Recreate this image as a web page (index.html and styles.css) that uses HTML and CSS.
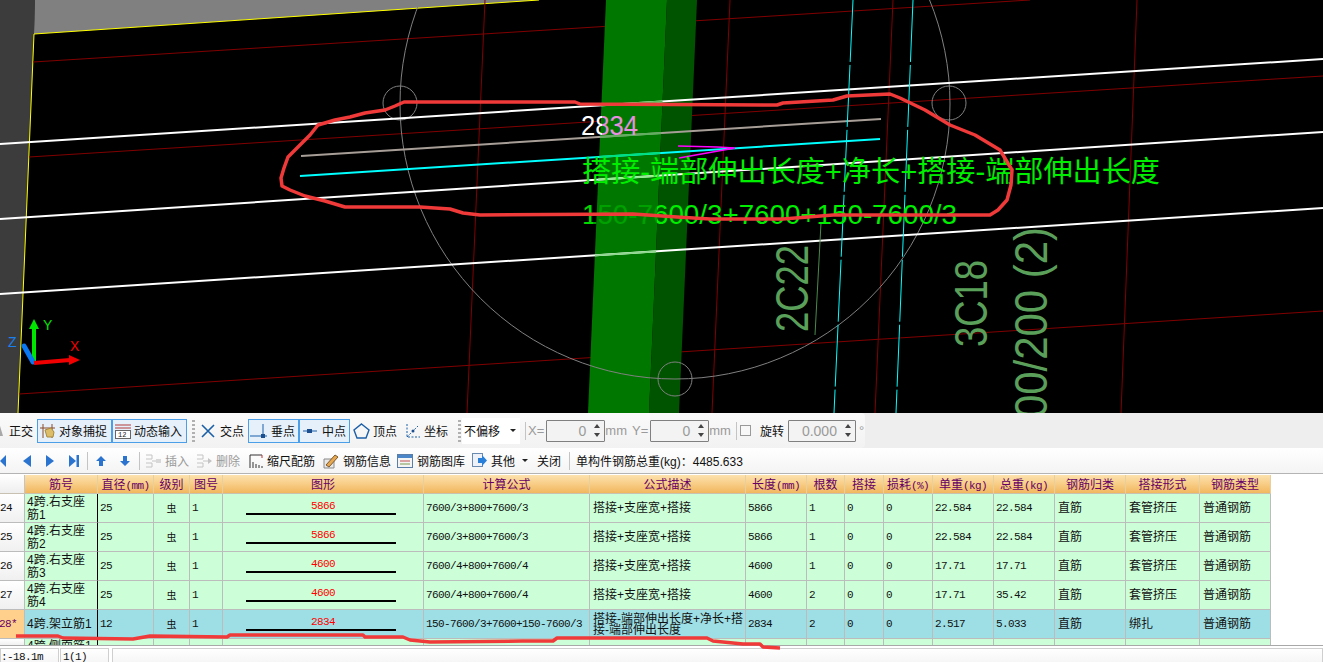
FILE: index.html
```html
<!DOCTYPE html>
<html lang="zh-CN">
<head>
    <meta charset="UTF-8">
    <title>钢筋三维</title>
    <link rel="stylesheet" href="styles.css">
</head>
<body>
<div class="page">

    <!-- 三维视图 -->
    <svg class="view" width="1323" height="413" viewBox="0 0 1323 413">
        <defs>
            <clipPath id="col-clip"><polygon points="606,0 667,0 649,413 588,413"/></clipPath>
            <linearGradient id="len-fill" x1="0" x2="1" y1="0" y2="0">
                <stop offset="0.36" stop-color="#ffffff"/>
                <stop offset="0.36" stop-color="#e88ee0"/>
            </linearGradient>
            <linearGradient id="calc-fill" gradientUnits="userSpaceOnUse" x1="582" x2="957" y1="0" y2="0">
                <stop offset="0.03" stop-color="#00d800"/>
                <stop offset="0.03" stop-color="#00a000"/>
                <stop offset="0.2" stop-color="#00a000"/>
                <stop offset="0.2" stop-color="#00ee00"/>
            </linearGradient>
        </defs>
        <rect width="1323" height="413" fill="#000"/>
        <polygon points="0,0 35,0 34,34 18,413 0,413" fill="#3c3c3c"/>
        <polygon points="35,0 539,0 34,34" fill="#808080"/>
        <polyline points="539,0 34,34 18,413" fill="none" stroke="#ffff00"/>

        <g stroke="#800000" fill="none">
            <line x1="33" y1="62" x2="1030" y2="0"/>
            <line x1="29" y1="157" x2="1323" y2="76"/>
            <line x1="19" y1="394" x2="1323" y2="311"/>
            <line x1="485" y1="0" x2="467" y2="413"/>
            <line x1="730" y1="0" x2="712" y2="413"/>
            <line x1="893" y1="0" x2="875" y2="413"/>
            <line x1="1137" y1="0" x2="1121" y2="413"/>
        </g>

        <polygon points="606,0 667,0 649,413 588,413" fill="#007800"/>
        <polygon points="667,0 697,0 679,413 649,413" fill="#005400"/>

        <circle cx="675" cy="104" r="275" fill="none" stroke="#808080"/>
        <circle cx="400" cy="103" r="17" fill="none" stroke="#808080"/>
        <circle cx="949" cy="103" r="17" fill="none" stroke="#808080"/>
        <circle cx="675" cy="379" r="17" fill="none" stroke="#808080"/>

        <g stroke="#fff" stroke-width="2">
            <line x1="0" y1="144" x2="1323" y2="59"/>
            <line x1="0" y1="219" x2="1323" y2="132"/>
            <line x1="0" y1="294" x2="1323" y2="208"/>
        </g>
        <line x1="301" y1="156" x2="881" y2="119" stroke="#a89e98" stroke-width="2"/>
        <line x1="300" y1="176" x2="880" y2="139" stroke="#00ffff" stroke-width="2"/>
        <g clip-path="url(#col-clip)" stroke-width="2">
            <line x1="0" y1="144" x2="1323" y2="59" stroke="#60c060"/>
            <line x1="0" y1="219" x2="1323" y2="132" stroke="#90ee90"/>
            <line x1="0" y1="294" x2="1323" y2="208" stroke="#90d890"/>
            <line x1="301" y1="156" x2="881" y2="119" stroke="#60b060"/>
            <line x1="300" y1="176" x2="880" y2="139" stroke="#00e080"/>
        </g>

        <g stroke="#00ffff" stroke-dasharray="62 3" fill="none">
            <line x1="853" y1="0" x2="834" y2="413"/>
            <line x1="913" y1="0" x2="896" y2="413"/>
        </g>
        <line x1="821" y1="223" x2="815" y2="335" stroke="#4a8a4a"/>
        <polyline points="678,146 717,147 735,148 679,158" fill="none" stroke="#ff00ff" stroke-width="1.5"/>

        <text class="t-len" x="581" y="135" textLength="57" lengthAdjust="spacingAndGlyphs">2834</text>
        <text class="t-desc" x="582" y="182" textLength="578" lengthAdjust="spacingAndGlyphs">搭接-端部伸出长度+净长+搭接-端部伸出长度</text>
        <text class="t-calc" x="582" y="224" textLength="375" lengthAdjust="spacingAndGlyphs">150-7600/3+7600+150-7600/3</text>
        <text class="t-mark" transform="translate(808 332) rotate(-90)" textLength="87" lengthAdjust="spacingAndGlyphs">2C22</text>
        <text class="t-mark" transform="translate(987 347) rotate(-90)" textLength="87" lengthAdjust="spacingAndGlyphs">3C18</text>
        <text class="t-mark" transform="translate(1047 418) rotate(-90)" textLength="191" lengthAdjust="spacingAndGlyphs">00/200 (2)</text>

        <!-- 坐标轴 -->
        <line x1="34" y1="363" x2="34" y2="328" stroke="#00e600" stroke-width="4"/>
        <polygon points="34,319 39,329 29,329" fill="#00e600"/>
        <line x1="33" y1="362" x2="24" y2="346" stroke="#0a78f0" stroke-width="5" stroke-linecap="round"/>
        <line x1="34" y1="363" x2="70" y2="360" stroke="#f00000" stroke-width="4"/>
        <polygon points="80,360 69,355 69,365" fill="#f00000"/>
        <text class="t-axis" x="43" y="330" fill="#00e600">Y</text>
        <text class="t-axis" x="8" y="347" fill="#1a80f0">Z</text>
        <text class="t-axis" x="70" y="351" fill="#f00000">X</text>
    </svg>

    <!-- 捕捉工具条 -->
    <div class="bar-snap">
        <div class="strip">
            <svg class="ico-cut" width="3" height="12" viewBox="0 0 3 12"><path d="M0 1L3 11L0 11Z" fill="#a8a8a8"/></svg>
            <span class="tool first">正交</span>
            <span class="tool on wide">
                <svg width="16" height="16" viewBox="0 0 16 16"><path d="M3 1V15M12 1V15M0 5H15" stroke="#8a4b2a" fill="none"/><path d="M5 7L11 5L14 9L13 14L7 14Z" fill="#dcbd6a" stroke="#a98a3a"/></svg>
                对象捕捉
            </span>
            <span class="tool on wide">
                <svg width="16" height="16" viewBox="0 0 16 16"><path d="M0 2H16M0 5H16" stroke="#b03a3a"/><rect x="0.5" y="7.5" width="15" height="8" fill="#fff" stroke="#666"/><text class="ico-num" x="3" y="14">12</text></svg>
                动态输入
            </span>
            <span class="grip"></span>
            <span class="tool cross">
                <svg width="16" height="16" viewBox="0 0 16 16"><path d="M2 2L14 14M14 2L2 14" stroke="#1b5fa8" stroke-width="1.6"/></svg>
                交点
            </span>
            <span class="tool on snap">
                <svg width="17" height="16" viewBox="0 0 17 16"><path d="M0 13H17M13 1V13" stroke="#1b5fa8"/><rect x="11" y="11" width="4" height="4" fill="#1b4f90"/></svg>
                垂点
            </span>
            <span class="tool on snap">
                <svg width="17" height="16" viewBox="0 0 17 16"><path d="M2 8H16" stroke="#1b5fa8"/><rect x="6" y="6" width="5" height="4" fill="#1b4f90"/></svg>
                中点
            </span>
            <span class="tool apex">
                <svg width="17" height="16" viewBox="0 0 17 16"><path d="M8.5 1L16 7L13 15H4L1 7Z" fill="none" stroke="#1b5fa8" stroke-width="1.4"/></svg>
                顶点
            </span>
            <span class="tool coord">
                <svg width="17" height="16" viewBox="0 0 17 16"><path d="M3 1V14H16M3 14L14 3" stroke="#1b5fa8" stroke-dasharray="2 1.5" fill="none"/><circle cx="9" cy="8" r="1.5" fill="#1b4f90"/></svg>
                坐标
            </span>
            <span class="grip offset"></span>
            <span class="combo">不偏移<i class="caret"></i></span>
            <span class="sep"></span>
            <span class="lbl dis">X=</span>
            <span class="spin"><b>0</b><i class="arrows"></i></span>
            <span class="lbl dis unit">mm</span>
            <span class="lbl dis ylab">Y=</span>
            <span class="spin"><b>0</b><i class="arrows"></i></span>
            <span class="lbl dis unit">mm</span>
            <span class="sep"></span>
            <span class="check"></span>
            <span class="lbl rotate">旋转</span>
            <span class="spin long"><b>0.000</b><i class="arrows"></i></span>
            <span class="lbl dis deg">°</span>
        </div>
    </div>

    <!-- 钢筋表工具条 -->
    <div class="bar-rebar">
        <svg class="nav n1" width="6" height="12" viewBox="0 0 6 12"><path d="M6 0V12L0 6Z" fill="#2a74d0"/></svg>
        <svg class="nav n2" width="8" height="12" viewBox="0 0 8 12"><path d="M8 0V12L0 6Z" fill="#2a74d0"/></svg>
        <svg class="nav n3" width="8" height="12" viewBox="0 0 8 12"><path d="M0 0V12L8 6Z" fill="#2a74d0"/></svg>
        <svg class="nav n4" width="10" height="12" viewBox="0 0 10 12"><path d="M0 0V12L7 6Z" fill="#2a74d0"/><rect x="7.5" width="2.5" height="12" fill="#2a74d0"/></svg>
        <span class="sep s-nav"></span>
        <svg class="nav up" width="10" height="10" viewBox="0 0 10 10"><path d="M5 0L10 5H7V10H3V5H0Z" fill="#2a74d0"/></svg>
        <svg class="nav down" width="10" height="10" viewBox="0 0 10 10"><path d="M5 10L10 5H7V0H3V5H0Z" fill="#2a74d0"/></svg>
        <span class="sep s-move"></span>
        <span class="act dis a-insert">
            <svg width="16" height="16" viewBox="0 0 16 16"><path d="M1 2H7V6H1M1 10H7V14H1M7 8H11" fill="none" stroke="#c4c4c4"/><rect x="11" y="6" width="5" height="4" fill="#d8d8d8"/></svg>
            插入
        </span>
        <span class="act dis a-delete">
            <svg width="16" height="16" viewBox="0 0 16 16"><path d="M1 2H7V6H1M1 10H7V14H1M7 8H12" fill="none" stroke="#c4c4c4"/><path d="M12 5L16 8L12 11Z" fill="#c4c4c4"/></svg>
            删除
        </span>
        <span class="act a-scale">
            <svg width="14" height="16" viewBox="0 0 14 16"><path d="M1 2H13M1 2V15M4 15V9M7 15V11M10 15V12M13 15V13" stroke="#333" fill="none"/><path d="M13 2V5" stroke="#c03030"/></svg>
            缩尺配筋
        </span>
        <span class="act a-info">
            <svg width="16" height="16" viewBox="0 0 16 16"><path d="M1 6H11V15H1Z" fill="#e8e8e8" stroke="#8a8a8a"/><path d="M3 12L12 2L15 4L6 14Z" fill="#e8a850" stroke="#7a5a30"/></svg>
            钢筋信息
        </span>
        <span class="act a-lib">
            <svg width="16" height="14" viewBox="0 0 16 14"><rect x="0.5" y="0.5" width="15" height="13" fill="#f4f4f4" stroke="#5a7ea8"/><rect x="1" y="1" width="14" height="3" fill="#4a86c8"/><path d="M3 7H13" stroke="#c05050"/><path d="M3 10H13" stroke="#7a9a50"/></svg>
            钢筋图库
        </span>
        <span class="act a-other">
            <svg width="15" height="15" viewBox="0 0 15 15"><rect x="0.5" y="0.5" width="10" height="13" fill="#eef2f8" stroke="#6a8ab0"/><path d="M6 5H10V2L15 7.5L10 13V10H6Z" fill="#2a80d8"/></svg>
            其他<i class="caret small"></i>
        </span>
        <span class="act a-close">关闭</span>
        <span class="sep s-total"></span>
        <span class="total">单构件钢筋总重(kg)：4485.633</span>
    </div>

    <!-- 钢筋表 -->
    <div class="grid-wrap">
        <table class="grid">
            <colgroup>
                <col class="c-no"><col class="c-name"><col class="c-dia"><col class="c-grade"><col class="c-fig">
                <col class="c-shape"><col class="c-calc"><col class="c-desc"><col class="c-len"><col class="c-count">
                <col class="c-lap"><col class="c-loss"><col class="c-unit"><col class="c-sum"><col class="c-kind">
                <col class="c-form"><col class="c-type">
            </colgroup>
            <thead>
                <tr>
                    <th class="corner"></th><th>筋号</th><th>直径<em>(mm)</em></th><th>级别</th><th>图号</th><th>图形</th>
                    <th>计算公式</th><th>公式描述</th><th>长度<em>(mm)</em></th><th>根数</th><th>搭接</th><th>损耗<em>(%)</em></th>
                    <th>单重<em>(kg)</em></th><th>总重<em>(kg)</em></th><th>钢筋归类</th><th>搭接形式</th><th>钢筋类型</th>
                </tr>
            </thead>
            <tbody>
                <tr>
                    <td class="no">24</td><td class="name">4跨.右支座<br>筋1</td><td class="num">25</td><td class="grade">虫</td><td class="num">1</td>
                    <td class="shape"><span>5866</span><i></i></td><td class="num">7600/3+800+7600/3</td><td>搭接+支座宽+搭接</td>
                    <td class="num">5866</td><td class="num">1</td><td class="num">0</td><td class="num">0</td><td class="num">22.584</td><td class="num">22.584</td>
                    <td>直筋</td><td>套管挤压</td><td>普通钢筋</td>
                </tr>
                <tr>
                    <td class="no">25</td><td class="name">4跨.右支座<br>筋2</td><td class="num">25</td><td class="grade">虫</td><td class="num">1</td>
                    <td class="shape"><span>5866</span><i></i></td><td class="num">7600/3+800+7600/3</td><td>搭接+支座宽+搭接</td>
                    <td class="num">5866</td><td class="num">1</td><td class="num">0</td><td class="num">0</td><td class="num">22.584</td><td class="num">22.584</td>
                    <td>直筋</td><td>套管挤压</td><td>普通钢筋</td>
                </tr>
                <tr>
                    <td class="no">26</td><td class="name">4跨.右支座<br>筋3</td><td class="num">25</td><td class="grade">虫</td><td class="num">1</td>
                    <td class="shape"><span>4600</span><i></i></td><td class="num">7600/4+800+7600/4</td><td>搭接+支座宽+搭接</td>
                    <td class="num">4600</td><td class="num">1</td><td class="num">0</td><td class="num">0</td><td class="num">17.71</td><td class="num">17.71</td>
                    <td>直筋</td><td>套管挤压</td><td>普通钢筋</td>
                </tr>
                <tr>
                    <td class="no">27</td><td class="name">4跨.右支座<br>筋4</td><td class="num">25</td><td class="grade">虫</td><td class="num">1</td>
                    <td class="shape"><span>4600</span><i></i></td><td class="num">7600/4+800+7600/4</td><td>搭接+支座宽+搭接</td>
                    <td class="num">4600</td><td class="num">2</td><td class="num">0</td><td class="num">0</td><td class="num">17.71</td><td class="num">35.42</td>
                    <td>直筋</td><td>套管挤压</td><td>普通钢筋</td>
                </tr>
                <tr class="current">
                    <td class="no">28*</td><td class="name">4跨.架立筋1</td><td class="num">12</td><td class="grade">虫</td><td class="num">1</td>
                    <td class="shape"><span>2834</span><i></i></td><td class="num">150-7600/3+7600+150-7600/3</td><td class="tight">搭接-端部伸出长度+净长+搭<br>接-端部伸出长度</td>
                    <td class="num">2834</td><td class="num">2</td><td class="num">0</td><td class="num">0</td><td class="num">2.517</td><td class="num">5.033</td>
                    <td>直筋</td><td>绑扎</td><td>普通钢筋</td>
                </tr>
                <tr class="partial">
                    <td class="no"></td><td class="name"><div class="clip">4跨.侧面筋1</div></td><td></td><td></td><td></td><td></td><td></td><td></td>
                    <td></td><td></td><td></td><td></td><td></td><td></td><td></td><td></td><td></td>
                </tr>
            </tbody>
        </table>
    </div>

    <!-- 状态栏 -->
    <div class="status">
        <span class="cell c1">:-18.1m</span>
        <span class="cell c2">1(1)</span>
        <span class="cell c3"></span>
    </div>

    <!-- 截图上的红色手绘标记 -->
    <svg class="scribble" width="1323" height="662" viewBox="0 0 1323 662">
        <path d="M404 102L395 106L385 110L365 113L350 117L335 120L318 125L310 135L300 145L288 157L284 168L281 178L282 186L290 190L305 196L325 201L345 207L420 207L450 209L463 213L480 215L633 214L677 217L710 219L783 219L833 215L900 215L990 215L998 210L1007 200L1011 185L1012 170L1000 150L975 135L950 125L925 110L900 98L890 94L847 96L833 100L783 103L777 105L580 104L575 102Z"/>
        <path d="M16 636L58 636L63 638L133 639L150 636L227 637L230 635L363 635L365 637L403 637L410 640L430 642L522 641L553 641L557 638L707 638L713 641L743 644L760 644L763 647L780 648"/>
    </svg>
</div>
</body>
</html>
```

FILE: styles.css
```css
* {
    box-sizing: border-box;
}
html, body {
    margin: 0;
    padding: 0;
    background: #fff;
}
body {
    font-family: "Liberation Sans", "Noto Sans CJK SC", sans-serif;
    font-size: 12px;
    color: #111;
    overflow: hidden;
}
svg {
    flex: none;
}
.page {
    position: relative;
    width: 1323px;
    height: 662px;
    overflow: hidden;
}
.view {
    display: block;
}
.scribble {
    position: absolute;
    left: 0;
    top: 0;
    pointer-events: none;
}
.scribble path {
    fill: none;
    stroke: #f03a3a;
    stroke-width: 3.5;
    stroke-linejoin: round;
}

/* view text */
.t-len {
    font-size: 28px;
    fill: url(#len-fill);
}
.t-desc {
    font-size: 29px;
    fill: #00ee00;
}
.t-calc {
    font-size: 27px;
    fill: url(#calc-fill);
}
.t-mark {
    font-size: 46px;
    fill: #5aa05a;
}
.t-axis {
    font-size: 14px;
}
.ico-num {
    font-family: "Liberation Mono", monospace;
    font-size: 7px;
    fill: #222;
}

/* top toolbar */
.bar-snap {
    height: 35px;
    background: #eeeeee;
}
.strip {
    display: flex;
    align-items: center;
    width: 865px;
    height: 35px;
    background: linear-gradient(#fafafa, #f2f2f2);
    border-radius: 0 4px 4px 0;
}
.tool {
    display: flex;
    align-items: center;
    flex: none;
    white-space: nowrap;
}
.tool.first {
    margin-left: 6px;
    margin-right: 4px;
}
.tool.on {
    height: 24px;
    border: 1px solid #4a9fe8;
    background: #e6f0fa;
}
.tool.wide {
    width: 75px;
    padding: 0 4px 0 2px;
    gap: 3px;
}
.tool.snap {
    width: 51px;
    padding: 0 2px 0 1px;
    gap: 4px;
}
.tool.cross {
    margin-left: 5px;
    margin-right: 4px;
    gap: 4px;
}
.tool.apex {
    margin-left: 3px;
    gap: 3px;
}
.tool.coord {
    margin-left: 7px;
    gap: 3px;
}
.grip {
    flex: none;
    width: 3px;
    height: 22px;
    margin-left: 5px;
    background: repeating-linear-gradient(#b0b0b0 0 2px, transparent 2px 4px);
}
.grip.offset {
    margin-left: 10px;
}
.combo {
    display: flex;
    align-items: center;
    flex: none;
    width: 58px;
    height: 26px;
    margin-left: 1px;
    padding-left: 2px;
    background: #fff;
}
.caret {
    width: 0;
    height: 0;
    margin-left: 10px;
    border: 3px solid transparent;
    border-top: 3px solid #222;
    border-bottom: 0;
}
.caret.small {
    margin-left: 3px;
}
.sep {
    flex: none;
    width: 1px;
    height: 18px;
    margin-left: 5px;
    background: #c4c4c4;
}
.lbl {
    flex: none;
    margin-left: 2px;
    font-size: 13px;
    white-space: nowrap;
}
.dis {
    color: #9a9a9a;
}
.lbl.unit {
    margin-left: 0;
}
.lbl.ylab {
    margin-left: 5px;
}
.lbl.rotate {
    margin-left: 9px;
    margin-right: 2px;
    font-size: 12px;
}
.lbl.deg {
    margin-left: 3px;
}
.spin {
    position: relative;
    display: block;
    flex: none;
    width: 59px;
    height: 22px;
    margin-left: 2px;
    padding-right: 18px;
    border: 1px solid #808080;
    border-radius: 1px;
    background: #f3f3f3;
    text-align: right;
    line-height: 20px;
}
.spin.long {
    width: 68px;
}
.spin b {
    font-size: 14px;
    font-weight: normal;
    color: #9a9a9a;
}
/* up and down arrows of the number box */
.arrows {
    position: absolute;
    right: 4px;
    top: 3px;
    width: 0;
    height: 0;
    border: 3px solid transparent;
    border-bottom: 4px solid #444;
    border-top: 0;
}
.arrows::after {
    content: "";
    position: absolute;
    left: -3px;
    top: 9px;
    width: 0;
    height: 0;
    border: 3px solid transparent;
    border-top: 4px solid #444;
    border-bottom: 0;
}
.check {
    flex: none;
    width: 11px;
    height: 11px;
    margin-left: 3px;
    border: 1px solid #9a9a9a;
    background: #f8f8f8;
}

/* rebar toolbar */
.bar-rebar {
    display: flex;
    align-items: center;
    height: 25px;
    background: linear-gradient(#ffffff, #f4f4f4);
}
.n2 {
    margin-left: 17px;
}
.n3 {
    margin-left: 15px;
}
.n4 {
    margin-left: 15px;
}
.s-nav {
    margin-left: 8px;
}
.up {
    margin-left: 8px;
}
.down {
    margin-left: 14px;
}
.s-move {
    margin-left: 9px;
}
.act {
    display: flex;
    align-items: center;
    flex: none;
    gap: 4px;
    white-space: nowrap;
}
.a-insert {
    margin-left: 5px;
}
.a-delete {
    margin-left: 7px;
}
.a-scale {
    margin-left: 9px;
}
.a-info {
    margin-left: 8px;
}
.a-lib {
    margin-left: 6px;
}
.a-other {
    margin-left: 7px;
}
.a-close {
    margin-left: 9px;
}
.s-total {
    margin-left: 8px;
}
.total {
    flex: none;
    margin-left: 6px;
    white-space: nowrap;
}

/* table */
.grid-wrap {
    height: 172px;
    padding-top: 1px;
    border-top: 1px solid #b4b4b4;
    overflow: hidden;
}
.grid {
    width: 1271px;
    border-collapse: separate;
    border-spacing: 0;
    table-layout: fixed;
}
.c-no { width: 25px; }
.c-name { width: 73px; }
.c-dia { width: 56px; }
.c-grade { width: 36px; }
.c-fig { width: 33px; }
.c-shape { width: 201px; }
.c-calc { width: 166px; }
.c-desc { width: 156px; }
.c-len { width: 61px; }
.c-count { width: 38px; }
.c-lap { width: 39px; }
.c-loss { width: 49px; }
.c-unit { width: 61px; }
.c-sum { width: 61px; }
.c-kind { width: 71px; }
.c-form { width: 74px; }
.c-type { width: 71px; }

.grid th {
    height: 19px;
    padding: 0 0 1px;
    border-right: 1px solid #e8cf9e;
    border-bottom: 1px solid #c8c0b0;
    background: linear-gradient(#fde2ae, #f2b75e);
    color: #660066;
    font-weight: normal;
    white-space: nowrap;
    overflow: hidden;
}
.grid th em {
    font-family: "Liberation Mono", monospace;
    font-style: normal;
    font-size: 11px;
    letter-spacing: -0.6px;
}
.grid th.corner {
    background: linear-gradient(#ffffff, #eeeeee);
    border-right-color: #c4c4c4;
}
.grid td {
    height: 29px;
    padding: 1px 0 0 3px;
    border-right: 1px solid #bcbcbc;
    border-bottom: 1px solid #bcbcbc;
    background: #ccffd8;
    line-height: 13px;
    overflow: hidden;
}
.grid td.num {
    padding-left: 2px;
    font-family: "Liberation Mono", "Noto Sans CJK SC", monospace;
    font-size: 11px;
    letter-spacing: -0.6px;
    white-space: nowrap;
}
.grid td.name {
    border-right: 1px solid #000;
    padding: 2px 0 0 2px;
    white-space: nowrap;
}
.grid .current td.name {
    padding-top: 1px;
}
.grid td.no {
    padding: 1px 0 0;
    background: linear-gradient(#ffffff, #f0f0f0);
    font-family: "Liberation Mono", monospace;
    font-size: 11px;
    letter-spacing: -0.6px;
    white-space: nowrap;
}
.grid td.grade {
    padding: 1px 0 0;
    font-size: 10px;
    text-align: center;
}
.grid td.shape {
    padding: 0;
    color: #ff0000;
    text-align: center;
    font-family: "Liberation Mono", monospace;
    font-size: 11px;
    letter-spacing: -0.6px;
    line-height: 10px;
}
.shape span {
    display: block;
    margin-bottom: 2px;
}
.shape i {
    display: block;
    width: 150px;
    height: 2px;
    margin-left: 23px;
    background: #000;
}
.grid td.tight {
    line-height: 11px;
    white-space: nowrap;
}
.current td {
    background: #9edfe5;
}
.grid .current td.no {
    background: #ffd08c;
    color: #660066;
    text-indent: -1px;
}
/* last row is only partly visible above the status bar */
.grid .partial td {
    height: 6px;
    padding-top: 0;
    border-bottom: 0;
    vertical-align: top;
}
.clip {
    height: 6px;
    padding-top: 1px;
    overflow: hidden;
}

/* status bar */
.status {
    display: flex;
    height: 17px;
    padding-top: 2px;
    border-top: 1px solid #a8a8a8;
    background: #fff;
    overflow: hidden;
}
.cell {
    flex: none;
    height: 14px;
    border: 1px solid #cfcfcf;
    border-bottom: 0;
    background: linear-gradient(#ffffff, #f6f6f6);
    font-family: "Liberation Mono", monospace;
    font-size: 11px;
    letter-spacing: -0.6px;
    line-height: 17px;
    white-space: nowrap;
    overflow: hidden;
}
.c1 {
    width: 59px;
    margin-right: 1px;
}
.c2 {
    width: 49px;
    margin-right: 3px;
    padding-left: 2px;
}
.c3 {
    flex: 1;
}
```
